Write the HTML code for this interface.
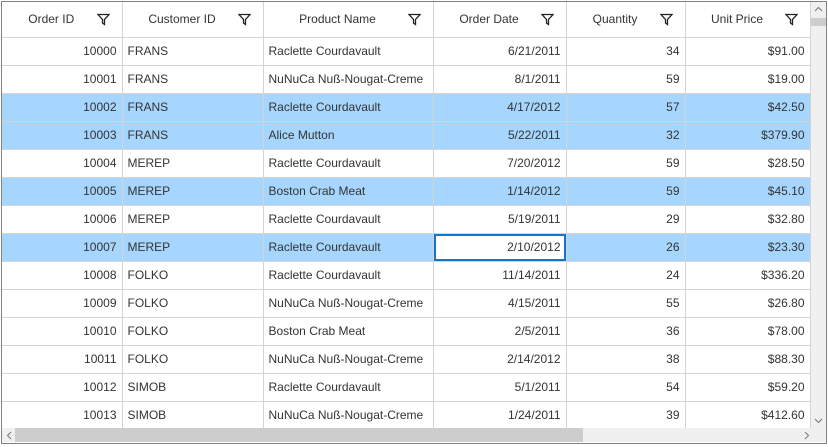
<!DOCTYPE html>
<html><head><style>
body{margin:0;width:828px;height:447px;background:#fff;font-family:"Liberation Sans",sans-serif;font-size:12px;color:#333;overflow:hidden;position:relative}
.frame{position:absolute;left:1px;top:1px;width:824px;height:441px;border:1px solid #828282}
table{position:absolute;left:2px;top:2px;border-collapse:collapse;table-layout:fixed}
td,th{border-right:1px solid #d4d4d4;border-bottom:1px solid #d4d4d4;height:28px;padding:0 5px;white-space:nowrap;overflow:hidden;box-sizing:border-box}
th{height:35px;font-weight:normal;position:relative;text-align:center;padding-right:26px}
th svg{position:absolute;right:12px;top:11px}
td.r{text-align:right}
tr.s td{background:#a6d6fd}
td.cur{background:#fff!important;box-shadow:inset 0 0 0 2px #1874c8}
.vs{position:absolute;left:811px;top:2px;width:15px;height:426px;background:#f0f0f0}
.hs{position:absolute;left:2px;top:428px;width:809px;height:14px;background:#f0f0f0}
.corner{position:absolute;left:811px;top:428px;width:15px;height:14px;background:#f0f0f0}
</style></head><body>
<div class="frame"></div>
<table>
<colgroup><col style="width:120px"><col style="width:141px"><col style="width:170px"><col style="width:133px"><col style="width:119px"><col style="width:125px"></colgroup>
<tr>
<th>Order ID<svg width="13" height="13" viewBox="0 0 13 13"><path d="M1 1.5H12L7.5 6.5V11.5L5.5 10V6.5Z" fill="none" stroke="#222" stroke-width="1.3"/></svg></th>
<th>Customer ID<svg width="13" height="13" viewBox="0 0 13 13"><path d="M1 1.5H12L7.5 6.5V11.5L5.5 10V6.5Z" fill="none" stroke="#222" stroke-width="1.3"/></svg></th>
<th>Product Name<svg width="13" height="13" viewBox="0 0 13 13"><path d="M1 1.5H12L7.5 6.5V11.5L5.5 10V6.5Z" fill="none" stroke="#222" stroke-width="1.3"/></svg></th>
<th>Order Date<svg width="13" height="13" viewBox="0 0 13 13"><path d="M1 1.5H12L7.5 6.5V11.5L5.5 10V6.5Z" fill="none" stroke="#222" stroke-width="1.3"/></svg></th>
<th>Quantity<svg width="13" height="13" viewBox="0 0 13 13"><path d="M1 1.5H12L7.5 6.5V11.5L5.5 10V6.5Z" fill="none" stroke="#222" stroke-width="1.3"/></svg></th>
<th>Unit Price<svg width="13" height="13" viewBox="0 0 13 13"><path d="M1 1.5H12L7.5 6.5V11.5L5.5 10V6.5Z" fill="none" stroke="#222" stroke-width="1.3"/></svg></th>
</tr>
<tr><td class="r">10000</td><td>FRANS</td><td>Raclette Courdavault</td><td class="r">6/21/2011</td><td class="r">34</td><td class="r">$91.00</td></tr>
<tr><td class="r">10001</td><td>FRANS</td><td>NuNuCa Nuß-Nougat-Creme</td><td class="r">8/1/2011</td><td class="r">59</td><td class="r">$19.00</td></tr>
<tr class="s"><td class="r">10002</td><td>FRANS</td><td>Raclette Courdavault</td><td class="r">4/17/2012</td><td class="r">57</td><td class="r">$42.50</td></tr>
<tr class="s"><td class="r">10003</td><td>FRANS</td><td>Alice Mutton</td><td class="r">5/22/2011</td><td class="r">32</td><td class="r">$379.90</td></tr>
<tr><td class="r">10004</td><td>MEREP</td><td>Raclette Courdavault</td><td class="r">7/20/2012</td><td class="r">59</td><td class="r">$28.50</td></tr>
<tr class="s"><td class="r">10005</td><td>MEREP</td><td>Boston Crab Meat</td><td class="r">1/14/2012</td><td class="r">59</td><td class="r">$45.10</td></tr>
<tr><td class="r">10006</td><td>MEREP</td><td>Raclette Courdavault</td><td class="r">5/19/2011</td><td class="r">29</td><td class="r">$32.80</td></tr>
<tr class="s"><td class="r">10007</td><td>MEREP</td><td>Raclette Courdavault</td><td class="r cur">2/10/2012</td><td class="r">26</td><td class="r">$23.30</td></tr>
<tr><td class="r">10008</td><td>FOLKO</td><td>Raclette Courdavault</td><td class="r">11/14/2011</td><td class="r">24</td><td class="r">$336.20</td></tr>
<tr><td class="r">10009</td><td>FOLKO</td><td>NuNuCa Nuß-Nougat-Creme</td><td class="r">4/15/2011</td><td class="r">55</td><td class="r">$26.80</td></tr>
<tr><td class="r">10010</td><td>FOLKO</td><td>Boston Crab Meat</td><td class="r">2/5/2011</td><td class="r">36</td><td class="r">$78.00</td></tr>
<tr><td class="r">10011</td><td>FOLKO</td><td>NuNuCa Nuß-Nougat-Creme</td><td class="r">2/14/2012</td><td class="r">38</td><td class="r">$88.30</td></tr>
<tr><td class="r">10012</td><td>SIMOB</td><td>Raclette Courdavault</td><td class="r">5/1/2011</td><td class="r">54</td><td class="r">$59.20</td></tr>
<tr><td class="r">10013</td><td>SIMOB</td><td>NuNuCa Nuß-Nougat-Creme</td><td class="r">1/24/2011</td><td class="r">39</td><td class="r">$412.60</td></tr>
</table>
<div class="vs">
<svg style="position:absolute;left:3px;top:4px" width="9" height="6"><path d="M1 5L4.5 1.5L8 5" fill="none" stroke="#777"/></svg>
<div style="position:absolute;left:0;top:16px;width:15px;height:8px;background:#cdcdcd"></div>
<svg style="position:absolute;left:3px;top:416px" width="9" height="6"><path d="M1 1L4.5 4.5L8 1" fill="none" stroke="#777"/></svg>
</div>
<div class="hs">
<svg style="position:absolute;left:4px;top:3px" width="6" height="9"><path d="M5 1L1.5 4.5L5 8" fill="none" stroke="#777"/></svg>
<div style="position:absolute;left:13px;top:0;width:568px;height:14px;background:#cdcdcd"></div>
<svg style="position:absolute;left:802px;top:3px" width="6" height="9"><path d="M1 1L4.5 4.5L1 8" fill="none" stroke="#777"/></svg>
</div>
<div class="corner"></div>
</body></html>
